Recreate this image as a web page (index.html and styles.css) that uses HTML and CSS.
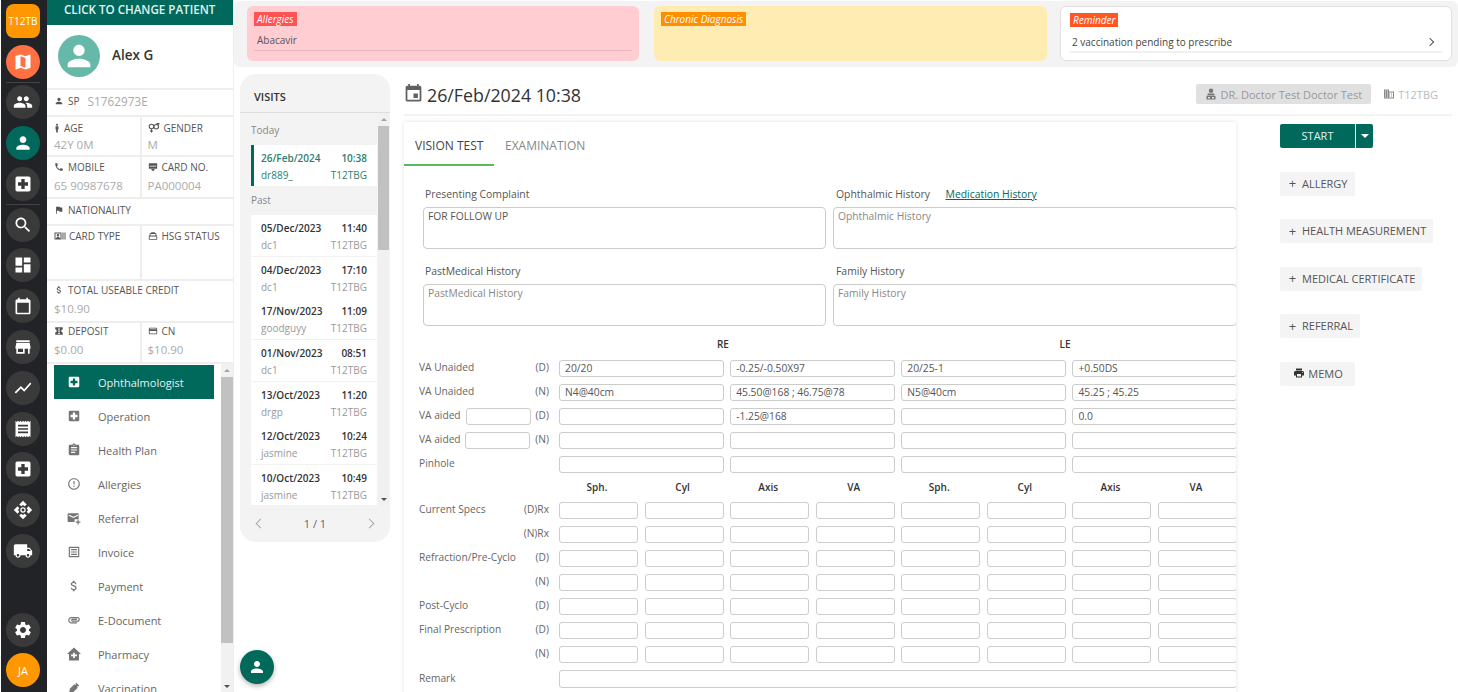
FILE: index.html
```html
<!DOCTYPE html>
<html>
<head>
    <title>Patient Visit - Vision Test</title>
    <link rel="stylesheet" href="styles.css">
</head>
<body>
    <svg class="icon-defs" aria-hidden="true">
        <symbol id="i-person" viewBox="0 0 24 24"><path d="M12 12c2.21 0 4-1.79 4-4s-1.79-4-4-4-4 1.79-4 4 1.79 4 4 4zm0 2c-2.67 0-8 1.34-8 4v2h16v-2c0-2.66-5.33-4-8-4z"/></symbol>
        <symbol id="i-people" viewBox="0 0 24 24"><path d="M16 11c1.66 0 2.99-1.34 2.99-3S17.66 5 16 5c-1.66 0-3 1.34-3 3s1.34 3 3 3zm-8 0c1.66 0 2.99-1.34 2.99-3S9.66 5 8 5C6.34 5 5 6.34 5 8s1.34 3 3 3zm0 2c-2.33 0-7 1.17-7 3.5V19h14v-2.5c0-2.33-4.67-3.5-7-3.5zm8 0c-.29 0-.62.02-.97.05 1.16.84 1.97 1.97 1.97 3.45V19h6v-2.5c0-2.33-4.67-3.5-7-3.5z"/></symbol>
        <symbol id="i-map" viewBox="0 0 24 24"><path d="M20.5 3l-.16.03L15 5.1 9 3 3.36 4.9c-.21.07-.36.25-.36.48V20.5c0 .28.22.5.5.5l.16-.03L9 18.9l6 2.1 5.64-1.9c.21-.07.36-.25.36-.48V3.5c0-.28-.22-.5-.5-.5zM15 19l-6-2.11V5l6 2.11V19z"/></symbol>
        <symbol id="i-hospital" viewBox="0 0 24 24"><path d="M19 3H5c-1.1 0-1.99.9-1.99 2L3 19c0 1.1.9 2 2 2h14c1.1 0 2-.9 2-2V5c0-1.1-.9-2-2-2zm-1 11h-4v4h-4v-4H6v-4h4V6h4v4h4v4z"/></symbol>
        <symbol id="i-search" viewBox="0 0 24 24"><path d="M15.5 14h-.79l-.28-.27C15.41 12.59 16 11.11 16 9.5 16 5.91 13.09 3 9.5 3S3 5.91 3 9.5 5.91 16 9.5 16c1.61 0 3.09-.59 4.23-1.57l.27.28v.79l5 4.99L20.49 19l-4.99-5zm-6 0C7.01 14 5 11.99 5 9.5S7.01 5 9.5 5 14 7.01 14 9.5 11.99 14 9.5 14z"/></symbol>
        <symbol id="i-dashboard" viewBox="0 0 24 24"><path d="M3 13h8V3H3v10zm0 8h8v-6H3v6zm10 0h8V11h-8v10zm0-18v6h8V3h-8z"/></symbol>
        <symbol id="i-calendar" viewBox="0 0 24 24"><path d="M19 4h-1V2h-2v2H8V2H6v2H5c-1.1 0-2 .9-2 2v14c0 1.1.9 2 2 2h14c1.1 0 2-.9 2-2V6c0-1.1-.9-2-2-2zm0 16H5V8h14v12z"/></symbol>
        <symbol id="i-event" viewBox="0 0 24 24"><path d="M17 12h-5v5h5v-5zM16 1v2H8V1H6v2H5c-1.11 0-1.99.9-1.99 2L3 19c0 1.1.89 2 2 2h14c1.1 0 2-.9 2-2V5c0-1.1-.9-2-2-2h-1V1h-2zm3 18H5V8h14v11z"/></symbol>
        <symbol id="i-store" viewBox="0 0 24 24"><path d="M20 4H4v2h16V4zm1 10v-2l-1-5H4l-1 5v2h1v6h10v-6h4v6h2v-6h1zm-9 4H6v-4h6v4z"/></symbol>
        <symbol id="i-chart" viewBox="0 0 24 24"><path d="M3.5 18.49l6-6.01 4 4L22 6.92l-1.41-1.41-7.09 7.97-4-4L2 16.99z"/></symbol>
        <symbol id="i-receipt" viewBox="0 0 24 24"><path d="M18 17H6v-2h12v2zm0-4H6v-2h12v2zm0-4H6V7h12v2zM3 22l1.5-1.5L6 22l1.5-1.5L9 22l1.5-1.5L12 22l1.5-1.5L15 22l1.5-1.5L18 22l1.5-1.5L21 22V2l-1.5 1.5L18 2l-1.5 1.5L15 2l-1.5 1.5L12 2l-1.5 1.5L9 2 7.5 3.5 6 2 4.5 3.5 3 2v20z"/></symbol>
        <symbol id="i-move" viewBox="0 0 24 24"><path d="M12 1l4.500 4.500-2.500 2-2-1.500-2 1.500-2.500-2zM23 12l-4.500 4.500-2-2.500 1.500-2-1.500-2 2-2.500zM12 23l-4.500-4.500 2.500-2 2 1.500 2-1.500 2.500 2zM1 12l4.500-4.500 2 2.500L6 12l1.500 2-2 2.500z"/><circle cx="12" cy="12" r="2.500" fill="none" stroke="currentColor" stroke-width="1.500"/></symbol>
        <symbol id="i-truck" viewBox="0 0 24 24"><path d="M20 8h-3V4H3c-1.1 0-2 .9-2 2v11h2c0 1.66 1.34 3 3 3s3-1.34 3-3h6c0 1.66 1.34 3 3 3s3-1.34 3-3h2v-5l-3-4zM6 18.5c-.83 0-1.5-.67-1.5-1.5s.67-1.5 1.5-1.5 1.5.67 1.5 1.5-.67 1.5-1.5 1.5zm13.5-9l1.96 2.5H17V9.5h2.5zm-1.5 9c-.83 0-1.5-.67-1.5-1.5s.67-1.5 1.5-1.5 1.5.67 1.5 1.5-.67 1.5-1.5 1.5z"/></symbol>
        <symbol id="i-settings" viewBox="0 0 24 24"><path d="M19.14 12.94c.04-.3.06-.61.06-.94 0-.32-.02-.64-.07-.94l2.03-1.58c.18-.14.23-.41.12-.61l-1.92-3.32c-.12-.22-.37-.29-.59-.22l-2.39.96c-.5-.38-1.03-.7-1.62-.94l-.36-2.54c-.04-.24-.24-.41-.48-.41h-3.84c-.24 0-.43.17-.47.41l-.36 2.54c-.59.24-1.13.57-1.62.94l-2.39-.96c-.22-.08-.47 0-.59.22L2.74 8.87c-.12.21-.08.47.12.61l2.03 1.58c-.05.3-.09.63-.09.94s.02.64.07.94l-2.03 1.58c-.18.14-.23.41-.12.61l1.92 3.32c.12.22.37.29.59.22l2.39-.96c.5.38 1.03.7 1.62.94l.36 2.54c.05.24.24.41.48.41h3.84c.24 0 .44-.17.47-.41l.36-2.54c.59-.24 1.13-.56 1.62-.94l2.39.96c.22.08.47 0 .59-.22l1.92-3.32c.12-.22.07-.47-.12-.61l-2.01-1.58zM12 15.6c-1.98 0-3.6-1.62-3.6-3.6s1.62-3.6 3.6-3.6 3.6 1.62 3.6 3.6-1.62 3.6-3.6 3.6z"/></symbol>
        <symbol id="i-phone" viewBox="0 0 24 24"><path d="M6.62 10.79c1.44 2.83 3.76 5.14 6.59 6.59l2.2-2.2c.27-.27.67-.36 1.02-.24 1.12.37 2.33.57 3.57.57.55 0 1 .45 1 1V20c0 .55-.45 1-1 1-9.39 0-17-7.61-17-17 0-.55.45-1 1-1h3.5c.55 0 1 .45 1 1 0 1.25.2 2.45.57 3.57.11.35.03.74-.25 1.02l-2.2 2.2z"/></symbol>
        <symbol id="i-flag" viewBox="0 0 24 24"><path d="M14.4 6L14 4H5v17h2v-7h5.6l.4 2h7V6z"/></symbol>
        <symbol id="i-clipboard" viewBox="0 0 24 24"><path d="M19 3h-4.18C14.4 1.84 13.3 1 12 1c-1.3 0-2.4.84-2.82 2H5c-1.1 0-2 .9-2 2v14c0 1.1.9 2 2 2h14c1.1 0 2-.9 2-2V5c0-1.1-.9-2-2-2zm-7 0c.55 0 1 .45 1 1s-.45 1-1 1-1-.45-1-1 .45-1 1-1zm2 14H7v-2h7v2zm3-4H7v-2h10v2zm0-4H7V7h10v2z"/></symbol>
        <symbol id="i-alert" viewBox="0 0 24 24"><path d="M11 15h2v2h-2zm0-8h2v6h-2zm.99-5C6.47 2 2 6.48 2 12s4.47 10 9.99 10C17.52 22 22 17.52 22 12S17.52 2 11.99 2zM12 20c-4.42 0-8-3.58-8-8s3.58-8 8-8 8 3.58 8 8-3.58 8-8 8z"/></symbol>
        <symbol id="i-dollar" viewBox="0 0 24 24"><path d="M11.8 10.9c-2.27-.59-3-1.2-3-2.15 0-1.09 1.01-1.85 2.7-1.85 1.78 0 2.44.85 2.5 2.1h2.21c-.07-1.72-1.12-3.3-3.21-3.81V3h-3v2.16c-1.94.42-3.5 1.68-3.5 3.61 0 2.31 1.91 3.46 4.7 4.13 2.5.6 3 1.48 3 2.41 0 .69-.49 1.79-2.7 1.79-2.06 0-2.87-.92-2.98-2.1h-2.2c.12 2.19 1.76 3.42 3.68 3.83V21h3v-2.15c1.95-.37 3.5-1.5 3.5-3.55 0-2.84-2.43-3.81-4.7-4.4z"/></symbol>
        <symbol id="i-print" viewBox="0 0 24 24"><path d="M19 8H5c-1.66 0-3 1.34-3 3v6h4v4h12v-4h4v-6c0-1.66-1.34-3-3-3zm-3 11H8v-5h8v5zm3-7c-.55 0-1-.45-1-1s.45-1 1-1 1 .45 1 1-.45 1-1 1zm-1-9H6v4h12V3z"/></symbol>
        <symbol id="i-invoice" viewBox="0 0 24 24"><path fill-rule="evenodd" d="M3 3h18v18H3zM5 5v14h14V5zM7 7h10v2H7zM7 11h10v2H7zM7 15h10v2H7z"/></symbol>
        <symbol id="i-card" viewBox="0 0 24 24"><path d="M20 4H4c-1.11 0-1.99.89-1.99 2L2 18c0 1.11.89 2 2 2h16c1.11 0 2-.89 2-2V6c0-1.11-.89-2-2-2zm0 14H4v-6h16v6zm0-10H4V6h16v2z"/></symbol>
        <symbol id="i-attach" viewBox="0 0 24 24"><path d="M2 12.5C2 9.46 4.46 7 7.5 7H18c2.21 0 4 1.79 4 4s-1.79 4-4 4H9.5C8.12 15 7 13.88 7 12.5S8.12 10 9.5 10H17v2H9.41c-.55 0-.55 1 0 1H18c1.1 0 2-.9 2-2s-.9-2-2-2H7.5C5.57 9 4 10.57 4 12.5S5.57 16 7.5 16H17v2H7.5C4.46 18 2 15.54 2 12.5z"/></symbol>
        <symbol id="i-pharmacy" viewBox="0 0 24 24"><path fill-rule="evenodd" d="M12 1L0 12h3.500V23h17V12H24zM10.500 10h3v3H17v3h-3.500v3h-3v-3H7v-3h3.500z"/></symbol>
        <symbol id="i-syringe" viewBox="0 0 24 24"><path d="M16 3l5 5-1.500 1.500-1-1-1.500 1.500 1.500 1.500-8 8H6.500L4 22l-2-2 2.500-2.500V13.500l8-8L14 7l1.500-1.500-1-1z"/></symbol>
        <symbol id="i-mail" viewBox="0 0 24 24"><path d="M19 4H3c-1.100 0-2 .9-2 2v11c0 1.100.9 2 2 2h10v-5h7V6c0-1.100-.9-2-2-2zm-8 8L3 8V6l8 4 8-4v2zM18 15v3h-3v2h3v3h2v-3h3v-2h-3v-3z"/></symbol>
        <symbol id="i-male" viewBox="0 0 24 24"><path d="M12 1.500a2.500 2.500 0 110 5 2.500 2.500 0 010-5zM8.500 8h7v7.500H14V23h-4v-7.500H8.500z"/></symbol>
        <symbol id="i-gender" viewBox="0 0 24 24"><path fill="none" stroke="currentColor" stroke-width="2.200" d="M7 4.500a4.500 4.500 0 100 9 4.500 4.500 0 000-9zM7 13.500V21M4 18h6M16.500 5a4.500 4.500 0 100 9 4.500 4.500 0 000-9zM19 6l3-3M17 3h6"/></symbol>
        <symbol id="i-terminal" viewBox="0 0 24 24"><path fill-rule="evenodd" d="M2 3h20v13H2zM4 9v2h16V9zM8 17h8v1l-2 3h-4l-2-3z"/></symbol>
        <symbol id="i-idcard" viewBox="0 0 24 24"><path fill-rule="evenodd" d="M1 5h14v14H1zM3 7v10h1c0-2 2-3 4-3s4 1 4 3h1V7zM8 8a2.500 2.500 0 110 5 2.500 2.500 0 010-5zM17 5h2v14h-2zM21 5h2v14h-2z"/></symbol>
        <symbol id="i-housing" viewBox="0 0 24 24"><path fill-rule="evenodd" d="M2 11h2V7c0-1 1-2 2-2h1l1-2h8l1 2h1c1 0 2 1 2 2v4h2v10H2zM6 7v4h12V7zM4 13v6h16v-6z"/></symbol>
        <symbol id="i-deposit" viewBox="0 0 24 24"><path fill-rule="evenodd" d="M3 3h18v5.500a3.500 3.500 0 000 7V21H3v-5.500a3.500 3.500 0 000-7zM10 6v3h4V6zM10 11v3h4v-3zM10 16v3h4v-3z"/></symbol>
        <symbol id="i-doctor" viewBox="0 0 24 24"><path fill-rule="evenodd" d="M12 1a4.500 4.500 0 110 9 4.500 4.500 0 010-9zM6 11h12l2 4H4zM3 16h18v7H3zM6 18v3h4v-3zM14 18v3h4v-3z"/></symbol>
        <symbol id="i-building" viewBox="0 0 24 24"><path d="M12 7V3H2v18h20V7H10zM6 19H4v-2h2v2zm0-4H4v-2h2v2zm0-4H4V9h2v2zm0-4H4V5h2v2zm4 12H8v-2h2v2zm0-4H8v-2h2v2zm0-4H8V9h2v2zm0-4H8V5h2v2zm10 12h-8v-2h2v-2h-2v-2h2v-2h-2V9h8v10zm-2-8h-2v2h2v-2zm0 4h-2v2h2v-2z"/></symbol>
    </svg>

    <nav class="rail">
        <div class="rail-btn rail-square">T12TB</div>
        <div class="rail-btn rail-orange"><svg class="ic-20"><use href="#i-map"/></svg></div>
        <div class="rail-sep"></div>
        <div class="rail-btn"><svg class="ic-20"><use href="#i-people"/></svg></div>
        <div class="rail-btn rail-active"><svg class="ic-20"><use href="#i-person"/></svg></div>
        <div class="rail-btn"><svg class="ic-20"><use href="#i-hospital"/></svg></div>
        <div class="rail-sep"></div>
        <div class="rail-btn"><svg class="ic-20"><use href="#i-search"/></svg></div>
        <div class="rail-btn"><svg class="ic-20"><use href="#i-dashboard"/></svg></div>
        <div class="rail-btn"><svg class="ic-20"><use href="#i-calendar"/></svg></div>
        <div class="rail-btn"><svg class="ic-20"><use href="#i-store"/></svg></div>
        <div class="rail-btn"><svg class="ic-20"><use href="#i-chart"/></svg></div>
        <div class="rail-btn"><svg class="ic-20"><use href="#i-receipt"/></svg></div>
        <div class="rail-btn"><svg class="ic-20"><use href="#i-hospital"/></svg></div>
        <div class="rail-btn"><svg class="ic-20"><use href="#i-move"/></svg></div>
        <div class="rail-btn"><svg class="ic-20"><use href="#i-truck"/></svg></div>
        <div class="rail-btn rail-bottom"><svg class="ic-20"><use href="#i-settings"/></svg></div>
        <div class="rail-btn rail-user">JA</div>
    </nav>

    <aside class="patient">
        <div class="patient-head">CLICK TO CHANGE PATIENT</div>
        <div class="patient-name">
            <div class="avatar"><svg class="ic-34"><use href="#i-person"/></svg></div>
            <strong>Alex G</strong>
        </div>
        <div class="info-row row-sp">
            <div class="info-cell"><span class="info-label"><svg class="ic-10"><use href="#i-person"/></svg>SP</span><span class="sp-val">S1762973E</span></div>
        </div>
        <div class="info-row row-age">
            <div class="info-cell stack"><span class="info-label"><svg class="ic-10 ic-narrow"><use href="#i-male"/></svg>AGE</span><span class="info-val">42Y 0M</span></div>
            <div class="info-cell stack"><span class="info-label"><svg class="ic-12"><use href="#i-gender"/></svg>GENDER</span><span class="info-val">M</span></div>
        </div>
        <div class="info-row row-mobile">
            <div class="info-cell stack"><span class="info-label"><svg class="ic-10"><use href="#i-phone"/></svg>MOBILE</span><span class="info-val">65 90987678</span></div>
            <div class="info-cell stack"><span class="info-label"><svg class="ic-10"><use href="#i-terminal"/></svg>CARD NO.</span><span class="info-val">PA000004</span></div>
        </div>
        <div class="info-row row-sp">
            <div class="info-cell"><span class="info-label"><svg class="ic-10"><use href="#i-flag"/></svg>NATIONALITY</span></div>
        </div>
        <div class="info-row row-type">
            <div class="info-cell stack"><span class="info-label"><svg class="ic-12 ic-tight"><use href="#i-idcard"/></svg>CARD TYPE</span></div>
            <div class="info-cell stack"><span class="info-label"><svg class="ic-10"><use href="#i-housing"/></svg>HSG STATUS</span></div>
        </div>
        <div class="info-row row-credit">
            <div class="info-cell stack"><span class="info-label"><svg class="ic-10"><use href="#i-dollar"/></svg>TOTAL USEABLE CREDIT</span><span class="info-val">$10.90</span></div>
        </div>
        <div class="info-row row-credit row-last">
            <div class="info-cell stack"><span class="info-label"><svg class="ic-10"><use href="#i-deposit"/></svg>DEPOSIT</span><span class="info-val">$0.00</span></div>
            <div class="info-cell stack"><span class="info-label"><svg class="ic-10"><use href="#i-card"/></svg>CN</span><span class="info-val">$10.90</span></div>
        </div>
        <div class="menu-wrap">
            <ul class="menu">
                <li class="menu-item active"><svg class="ic-14"><use href="#i-hospital"/></svg>Ophthalmologist</li>
                <li class="menu-item"><svg class="ic-14"><use href="#i-hospital"/></svg>Operation</li>
                <li class="menu-item"><svg class="ic-14"><use href="#i-clipboard"/></svg>Health Plan</li>
                <li class="menu-item"><svg class="ic-14"><use href="#i-alert"/></svg>Allergies</li>
                <li class="menu-item"><svg class="ic-14"><use href="#i-mail"/></svg>Referral</li>
                <li class="menu-item"><svg class="ic-14"><use href="#i-invoice"/></svg>Invoice</li>
                <li class="menu-item"><svg class="ic-14"><use href="#i-dollar"/></svg>Payment</li>
                <li class="menu-item"><svg class="ic-14"><use href="#i-attach"/></svg>E-Document</li>
                <li class="menu-item"><svg class="ic-14"><use href="#i-pharmacy"/></svg>Pharmacy</li>
                <li class="menu-item"><svg class="ic-14"><use href="#i-syringe"/></svg>Vaccination</li>
            </ul>
            <div class="scrollbar menu-scroll">
                <span class="arrow-up"></span>
                <span class="thumb"></span>
                <span class="track"></span>
                <span class="arrow-down"></span>
            </div>
        </div>
    </aside>

    <div class="content">
        <header class="alerts">
            <section class="alert alert-red">
                <span class="alert-tag tag-red">Allergies</span>
                <div class="alert-line">Abacavir</div>
            </section>
            <section class="alert alert-yellow">
                <span class="alert-tag tag-orange">Chronic Diagnosis</span>
            </section>
            <section class="alert alert-white">
                <span class="alert-tag tag-deep">Reminder</span>
                <div class="alert-line reminder-line">2 vaccination pending to prescribe<span class="chev chev-right"></span></div>
            </section>
        </header>

        <div class="workspace">
            <aside class="visits">
                <div class="visits-head">VISITS</div>
                <div class="visits-body">
                    <div class="visit-list">
                        <div class="visit-group">Today</div>
                        <div class="visit selected"><div class="visit-top"><span>26/Feb/2024</span><span>10:38</span></div><div class="visit-sub"><span>dr889_</span><span>T12TBG</span></div></div>
                        <div class="visit-group group-past">Past</div>
                        <div class="visit"><div class="visit-top"><span>05/Dec/2023</span><span>11:40</span></div><div class="visit-sub"><span>dc1</span><span>T12TBG</span></div></div>
                        <div class="visit"><div class="visit-top"><span>04/Dec/2023</span><span>17:10</span></div><div class="visit-sub"><span>dc1</span><span>T12TBG</span></div></div>
                        <div class="visit"><div class="visit-top"><span>17/Nov/2023</span><span>11:09</span></div><div class="visit-sub"><span>goodguyy</span><span>T12TBG</span></div></div>
                        <div class="visit"><div class="visit-top"><span>01/Nov/2023</span><span>08:51</span></div><div class="visit-sub"><span>dc1</span><span>T12TBG</span></div></div>
                        <div class="visit"><div class="visit-top"><span>13/Oct/2023</span><span>11:20</span></div><div class="visit-sub"><span>drgp</span><span>T12TBG</span></div></div>
                        <div class="visit"><div class="visit-top"><span>12/Oct/2023</span><span>10:24</span></div><div class="visit-sub"><span>jasmine</span><span>T12TBG</span></div></div>
                        <div class="visit"><div class="visit-top"><span>10/Oct/2023</span><span>10:49</span></div><div class="visit-sub"><span>jasmine</span><span>T12TBG</span></div></div>
                    </div>
                    <div class="scrollbar visits-scroll">
                        <span class="arrow-up"></span>
                        <span class="thumb"></span>
                        <span class="track"></span>
                        <span class="arrow-down"></span>
                    </div>
                </div>
                <div class="pager"><span class="chev chev-left"></span><span>1 / 1</span><span class="chev chev-right"></span></div>
            </aside>

            <main class="main">
                <div class="title-row">
                    <svg class="ic-title"><use href="#i-event"/></svg>
                    <h1>26/Feb/2024 10:38</h1>
                    <span class="doctor-chip"><svg class="ic-12"><use href="#i-doctor"/></svg>DR. Doctor Test Doctor Test</span>
                    <span class="branch"><svg class="ic-12"><use href="#i-building"/></svg>T12TBG</span>
                </div>
                <div class="main-body">
                    <div class="card">
                        <div class="tabs">
                            <span class="tab active">VISION TEST</span>
                            <span class="tab">EXAMINATION</span>
                        </div>
                        <div class="history">
                            <div class="hist-field">
                                <label>Presenting Complaint</label>
                                <textarea>FOR FOLLOW UP</textarea>
                            </div>
                            <div class="hist-field">
                                <label>Ophthalmic History <a class="hist-link">Medication History</a></label>
                                <textarea placeholder="Ophthalmic History"></textarea>
                            </div>
                            <div class="hist-field">
                                <label>PastMedical History</label>
                                <textarea placeholder="PastMedical History"></textarea>
                            </div>
                            <div class="hist-field">
                                <label>Family History</label>
                                <textarea placeholder="Family History"></textarea>
                            </div>
                        </div>

                        <div class="va-grid">
                            <div></div><div class="va-eye">RE</div><div class="va-eye">LE</div>

                            <div class="va-label"><span>VA Unaided</span><span>(D)</span></div>
                            <input class="wide" value="20/20"><input class="wide" value="-0.25/-0.50X97"><input class="wide" value="20/25-1"><input class="wide" value="+0.50DS">

                            <div class="va-label"><span>VA Unaided</span><span>(N)</span></div>
                            <input class="wide" value="N4@40cm"><input class="wide" value="45.50@168 ; 46.75@78"><input class="wide" value="N5@40cm"><input class="wide" value="45.25 ; 45.25">

                            <div class="va-label"><span>VA aided</span><input class="aided"><span>(D)</span></div>
                            <input class="wide"><input class="wide" value="-1.25@168"><input class="wide"><input class="wide" value="0.0">

                            <div class="va-label"><span>VA aided</span><input class="aided"><span>(N)</span></div>
                            <input class="wide"><input class="wide"><input class="wide"><input class="wide">

                            <div class="va-label"><span>Pinhole</span></div>
                            <input class="wide"><input class="wide"><input class="wide"><input class="wide">

                            <div></div>
                            <div class="va-col">Sph.</div><div class="va-col">Cyl</div><div class="va-col">Axis</div><div class="va-col">VA</div>
                            <div class="va-col">Sph.</div><div class="va-col">Cyl</div><div class="va-col">Axis</div><div class="va-col">VA</div>

                            <div class="va-label"><span>Current Specs</span><span>(D)Rx</span></div>
                            <input><input><input><input><input><input><input><input>

                            <div class="va-label end"><span>(N)Rx</span></div>
                            <input><input><input><input><input><input><input><input>

                            <div class="va-label"><span>Refraction/Pre-Cyclo</span><span>(D)</span></div>
                            <input><input><input><input><input><input><input><input>

                            <div class="va-label end"><span>(N)</span></div>
                            <input><input><input><input><input><input><input><input>

                            <div class="va-label"><span>Post-Cyclo</span><span>(D)</span></div>
                            <input><input><input><input><input><input><input><input>

                            <div class="va-label"><span>Final Prescription</span><span>(D)</span></div>
                            <input><input><input><input><input><input><input><input>

                            <div class="va-label end"><span>(N)</span></div>
                            <input><input><input><input><input><input><input><input>

                            <div class="va-label"><span>Remark</span></div>
                            <input class="full">
                        </div>
                    </div>

                    <div class="actions">
                        <div class="start-btn"><span class="start-main">START</span><span class="start-drop"><i class="caret"></i></span></div>
                        <button class="action-btn"><span class="plus">+</span>ALLERGY</button>
                        <button class="action-btn"><span class="plus">+</span>HEALTH MEASUREMENT</button>
                        <button class="action-btn"><span class="plus">+</span>MEDICAL CERTIFICATE</button>
                        <button class="action-btn"><span class="plus">+</span>REFERRAL</button>
                        <button class="action-btn memo"><svg class="ic-12"><use href="#i-print"/></svg>MEMO</button>
                    </div>
                </div>
            </main>
        </div>
    </div>

    <div class="fab"><svg class="ic-18"><use href="#i-person"/></svg></div>
</body>
</html>
```

FILE: styles.css
```css
* {
    box-sizing: border-box;
}
html, body {
    height: 100%;
}
body {
    margin: 0;
    height: 692px;
    display: flex;
    overflow: hidden;
    background: #fff;
    color: #444;
    font-family: "Open Sans", Arial, sans-serif;
    font-size: 10px;
}
svg {
    fill: currentColor;
    flex: none;
}
.icon-defs { display: none; }
.ic-10 { width: 10px; height: 10px; }
.ic-12 { width: 12px; height: 12px; }
.ic-14 { width: 14px; height: 14px; }
.ic-18 { width: 18px; height: 18px; }
.ic-20 { width: 20px; height: 20px; }
.ic-34 { width: 34px; height: 34px; }
.ic-narrow { margin: 0 -2px; }
.ic-tight { margin-right: -1px; }

/* Dark icon rail */
.rail {
    width: 47px;
    flex: none;
    display: flex;
    flex-direction: column;
    align-items: center;
    gap: 6.8px;
    padding: 4px 2px 5px 0;
    background: #212327;
    border-left: 1px solid #fff;
    height: 692px;
}
.rail-btn {
    width: 34px;
    height: 34px;
    flex: none;
    border-radius: 50%;
    background: #3a3a3a;
    color: #fff;
    display: flex;
    align-items: center;
    justify-content: center;
}
.rail-square {
    background: #ff9800;
    border-radius: 8px;
    font-size: 10px;
}
.rail-orange { background: #ff7043; }
.rail-active { background: #00695c; }
.rail-user { background: #ff9800; font-size: 11px; margin-top: -1px; }
.rail-bottom { margin-top: auto; }
.rail-sep {
    width: 34px;
    height: 1px;
    flex: none;
    background: #444;
    margin: -4px 0;
}

/* Patient panel */
.patient {
    width: 187px;
    flex: none;
    height: 692px;
    display: flex;
    flex-direction: column;
    border-right: 1px solid #eee;
}
.patient-head {
    height: 25px;
    flex: none;
    background: #00695c;
    color: #e0f2f1;
    font-size: 11.6px;
    font-weight: 600;
    padding: 2px 0 0 17px;
}
.patient-name {
    height: 63px;
    flex: none;
    display: flex;
    align-items: center;
    gap: 12px;
    padding: 0 0 1px 11px;
    font-size: 13.5px;
    color: #333;
}
.patient-name strong { font-weight: 600; margin-top: -2px; }
.avatar {
    width: 42px;
    height: 42px;
    border-radius: 50%;
    background: #66b9a8;
    color: #fff;
    display: flex;
    align-items: center;
    justify-content: center;
}
.info-row {
    display: flex;
    flex: none;
    border-top: 2px solid #eee;
}
.row-sp { height: 27px; }
.row-sp .info-cell { padding-bottom: 3px; }
.row-age { height: 40px; }
.row-mobile { height: 42px; }
.row-mobile .info-cell.stack { padding-top: 3px; gap: 4px; }
.row-type { height: 55px; }
.row-type .info-cell.stack { padding-top: 3px; }
.row-credit { height: 42px; }
.row-last { height: 41px; }
.info-cell {
    flex: 1;
    display: flex;
    align-items: center;
    padding-left: 7px;
    color: #555;
}
.info-cell + .info-cell { border-left: 2px solid #eee; padding-left: 6px; }
.info-cell.stack {
    flex-direction: column;
    align-items: flex-start;
    gap: 2px;
    padding-top: 4px;
}
.row-credit .info-cell.stack { gap: 4px; padding-top: 2px; }
.row-last .info-cell.stack { padding-top: 1px; }
.info-label {
    display: flex;
    align-items: center;
    gap: 4px;
    line-height: 14px;
}
.info-val, .sp-val {
    color: #aaa;
    font-size: 11.5px;
    line-height: 15px;
}
.sp-val { margin-left: 8px; font-size: 11.8px; }

.menu-wrap {
    flex: 1;
    min-height: 0;
    display: flex;
    border-top: 2px solid #eee;
    padding-left: 7px;
}
.menu {
    list-style: none;
    margin: 1px 0 0;
    padding: 0;
    width: 160px;
    flex: none;
}
.menu-item {
    height: 34px;
    display: flex;
    align-items: center;
    gap: 17px;
    padding-left: 13px;
    font-size: 11px;
    color: #666;
}
.menu-item svg { color: #757575; }
.menu-item.active {
    background: #00695c;
    color: #e0f2f1;
    font-weight: 500;
}
.menu-item.active svg { color: #fff; }

/* Scrollbars are drawn so that arrows and thumb sit where they should */
.scrollbar {
    display: flex;
    flex-direction: column;
    align-items: center;
    background: #f1f1f1;
    flex: none;
}
.thumb {
    width: 100%;
    background: #c1c1c1;
    flex: none;
}
.track { flex: 1; }
.arrow-up, .arrow-down {
    width: 0;
    height: 0;
    flex: none;
    border-left: 3px solid transparent;
    border-right: 3px solid transparent;
}
.arrow-up { border-bottom: 3px solid #a3a3a3; margin: 5px 0 5px; }
.arrow-down { border-top: 3px solid #505050; margin: 5px 0 4px; }
.menu-scroll { width: 12px; margin-left: 7px; }
.menu-scroll .thumb { height: 266px; }
.visits-scroll { width: 11px; margin-left: 1px; }
.visits-scroll .thumb { height: 124px; }

/* Right side */
.content {
    flex: 1;
    min-width: 0;
    display: flex;
    flex-direction: column;
}
.alerts {
    height: 66px;
    flex: none;
    margin-top: 1px;
    padding: 5px 7px 6px 13px;
    display: grid;
    grid-template-columns: 392px 393px 392px;
    gap: 15px;
    background: #f3f3f3;
    border-radius: 6px;
}
.alert {
    border-radius: 6px;
    padding: 6px 7px;
    color: #555;
    height: 55px;
}
.alert-red { background: #ffcdd2; }
.alert-yellow { background: #ffecb3; }
.alert-white {
    background: #fff;
    border: 1px solid #e0e0e0;
    padding: 6px 9px;
    margin: 0 2px 0 -2px;
}
.alert-tag {
    display: inline-block;
    height: 14px;
    line-height: 14px;
    padding: 0 3px;
    color: #fff;
    font-style: italic;
    font-size: 10px;
    vertical-align: top;
}
.tag-red { background: #ff5252; }
.tag-orange { background: #ff8f00; }
.tag-deep { background: #ff5722; }
.alert-line {
    margin-top: 0;
    padding: 7px 3px 3px;
    border-bottom: 1px solid #e9b8bc;
    line-height: 14px;
}
.reminder-line {
    display: flex;
    justify-content: space-between;
    align-items: center;
    padding: 8px 9px 2px 2px;
    border-bottom: 2px solid #f0f0f0;
    color: #444;
}
.chev {
    display: inline-block;
    width: 6px;
    height: 6px;
    border-top: 1px solid #555;
    border-right: 1px solid #555;
}
.chev-right { transform: rotate(45deg); }
.chev-left { transform: rotate(-135deg); }

.workspace {
    flex: 1;
    min-height: 0;
    display: flex;
    padding-right: 6px;
}

/* Visits column */
.visits {
    width: 150px;
    flex: none;
    height: 468px;
    margin: 7px 0 0 6px;
    background: #f3f3f3;
    border-radius: 16px;
    display: flex;
    flex-direction: column;
}
.visits-head {
    height: 39px;
    flex: none;
    border-bottom: 1px solid #ddd;
    padding: 15px 0 0 14px;
    font-size: 11px;
    font-weight: 600;
    color: #333;
    line-height: 15px;
}
.visits-body {
    height: 392px;
    flex: none;
    display: flex;
    padding-left: 11px;
}
.visit-list {
    width: 126px;
    flex: none;
    overflow: hidden;
}
.visit-group {
    height: 32px;
    padding-top: 10px;
    color: #888;
    line-height: 15px;
}
.group-past { height: 29px; padding-top: 7px; }
.visit {
    height: 41px;
    margin-bottom: 0.7px;
    padding: 5px 10px 0;
    background: #fff;
}
.visit.selected {
    border-left: 3px solid #00695c;
    padding-left: 7px;
    margin-bottom: 0;
}
.visit.selected .visit-top, .visit.selected .visit-sub { color: #2e7d72; }
.visit-top, .visit-sub {
    display: flex;
    justify-content: space-between;
    line-height: 16px;
    white-space: nowrap;
}
.visit-top {
    font-weight: 600;
    color: #333;
}
.visit-sub {
    color: #999;
    line-height: 17px;
    margin-top: 1px;
}
.pager {
    flex: 1;
    display: flex;
    align-items: center;
    justify-content: space-between;
    padding: 0 17px;
    color: #666;
    font-size: 11px;
}
.pager .chev { border-color: #aaa; width: 7px; height: 7px; }

/* Main area */
.main {
    flex: 1;
    min-width: 0;
    margin-left: 14px;
    display: flex;
    flex-direction: column;
}
.title-row {
    height: 42px;
    flex: none;
    margin-top: 7px;
    border-bottom: 2px solid #f3f3f3;
    display: flex;
    align-items: center;
    padding-right: 14px;
}
.ic-title {
    width: 21px;
    height: 21px;
    color: #616161;
    margin: 0 3px 2px -1px;
}
.title-row h1 {
    margin: 1px auto 0 0;
    font-size: 17.8px;
    font-weight: 500;
    color: #333;
}
.doctor-chip {
    height: 20px;
    display: flex;
    align-items: center;
    gap: 3px;
    padding: 0 9px;
    background: #e0e0e0;
    border-radius: 2px;
    color: #999;
    font-size: 11px;
}
.doctor-chip svg { color: #777; }
.branch {
    display: flex;
    align-items: center;
    gap: 3px;
    margin-left: 12px;
    color: #bbb;
    font-size: 11px;
}
.branch svg { color: #888; }
.main-body {
    flex: 1;
    min-height: 0;
    display: flex;
    padding-top: 6px;
}
.card {
    width: 832px;
    flex: none;
    box-shadow: 0 0 4px rgba(0,0,0,0.12);
    overflow: hidden;
    height: 580px;
}
.tabs {
    height: 44px;
    display: flex;
}
.tab {
    padding: 16px 11px 0;
    font-size: 12px;
    color: #888;
    line-height: 15px;
    white-space: nowrap;
}
.tab.active {
    width: 90px;
    color: #444;
    border-bottom: 2px solid #5cb85c;
}
.history {
    display: grid;
    grid-template-columns: 403px 404px;
    column-gap: 7px;
    row-gap: 14px;
    margin: 0 0 10px 19px;
    padding-top: 20px;
}
.hist-field label {
    display: block;
    padding: 1px 0 0 2px;
    height: 20px;
    line-height: 15px;
    color: #555;
    font-size: 10.4px;
}
.hist-field:nth-child(even) label { padding-left: 3px; }
.hist-field textarea {
    display: block;
    width: 100%;
    height: 42px;
    margin-top: 1px;
    border: 1px solid #ccc;
    border-radius: 4px;
    padding: 1px 4px;
    resize: none;
    font: 10.3px/14px "Open Sans", Arial, sans-serif;
    color: #555;
}
.hist-field textarea::placeholder { color: #888; }
.hist-link {
    margin-left: 13px;
    color: #00695c;
    text-decoration: underline;
}

/* Vision test table */
.va-grid {
    display: grid;
    grid-template-columns: 133.5px repeat(8, 1fr);
    column-gap: 6.5px;
    row-gap: 7px;
    margin-left: 15px;
    width: 818px;
}
.va-grid input {
    min-width: 0;
    width: 100%;
    height: 17px;
    border: 1px solid #ccc;
    border-radius: 3px;
    padding: 0 5px 1px;
    font: 10.3px "Open Sans", Arial, sans-serif;
    color: #555;
    background: #fff;
}
.va-grid .wide { grid-column: span 2; }
.va-grid .full { grid-column: span 8; height: 18px; }
.va-grid .aided {
    width: 65px;
    flex: none;
    padding: 0;
}
.va-eye {
    grid-column: span 4;
    text-align: center;
    font-weight: 600;
    color: #333;
    padding-right: 8px;
    line-height: 17px;
}
.va-col {
    text-align: center;
    font-weight: 600;
    color: #333;
    padding-right: 3px;
    line-height: 15px;
}
.va-label {
    display: flex;
    justify-content: space-between;
    align-items: center;
    color: #666;
    padding-right: 3.5px;
    line-height: 15px;
    font-size: 10.2px;
    white-space: nowrap;
    gap: 1px;
}
.va-label span { margin-bottom: 2px; }
.va-label.end { justify-content: flex-end; }

/* Action buttons */
.actions {
    margin-left: 44px;
    padding-top: 2px;
    display: flex;
    flex-direction: column;
    align-items: flex-start;
    gap: 23.5px;
}
.start-btn {
    display: flex;
    height: 24px;
    width: 93px;
    border-radius: 2px;
    overflow: hidden;
    color: #e0f2f1;
    font-size: 11px;
    font-weight: 500;
}
.start-main {
    flex: 1;
    background: #00695c;
    display: flex;
    align-items: center;
    justify-content: center;
    padding-bottom: 2px;
}
.start-drop {
    width: 17px;
    margin-left: 1px;
    background: #00695c;
    display: flex;
    align-items: center;
    justify-content: center;
}
.caret {
    width: 0;
    height: 0;
    border-left: 4px solid transparent;
    border-right: 4px solid transparent;
    border-top: 4px solid #fff;
}
.action-btn {
    height: 24px;
    border: 0;
    border-radius: 2px;
    background: #f4f4f4;
    padding: 0 7px 1px 8px;
    display: flex;
    align-items: center;
    gap: 5px;
    font: 11px "Open Sans", Arial, sans-serif;
    color: #555;
    white-space: nowrap;
}
.plus { font-size: 13px; width: 9px; }
.action-btn.memo {
    width: 75px;
    justify-content: center;
    gap: 3px;
}
.action-btn.memo svg { color: #333; }

.fab {
    position: absolute;
    left: 240px;
    top: 650px;
    width: 34px;
    height: 34px;
    border-radius: 50%;
    background: #00695c;
    color: #fff;
    display: flex;
    align-items: center;
    justify-content: center;
    box-shadow: 0 2px 5px rgba(0,0,0,0.3);
}
```
